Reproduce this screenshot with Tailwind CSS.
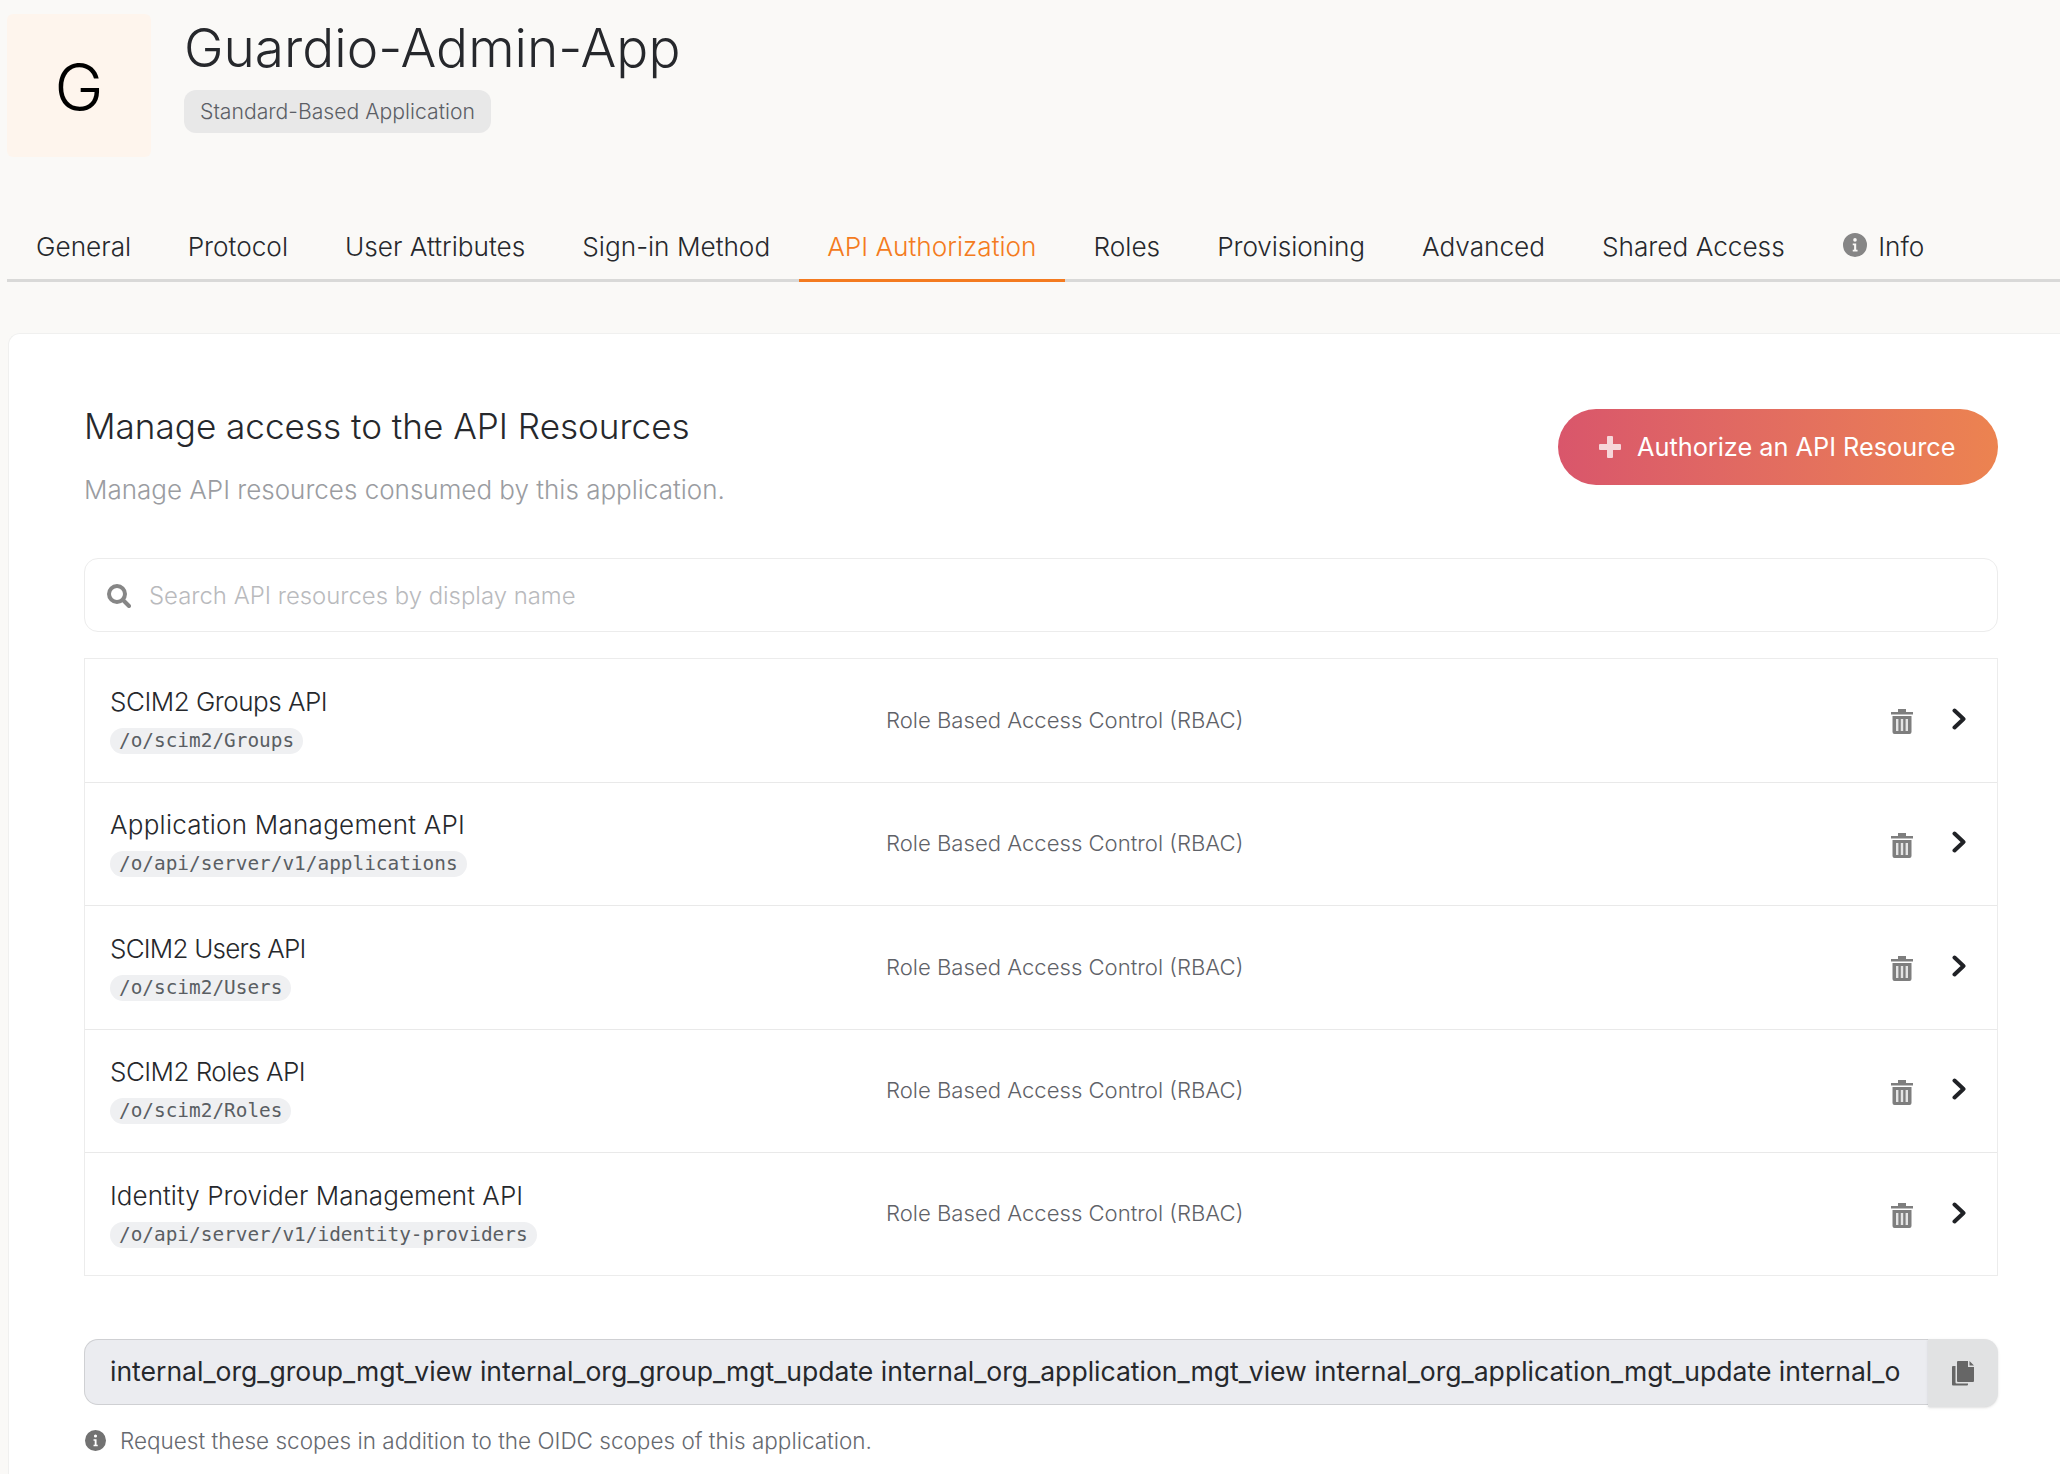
<!DOCTYPE html>
<html lang="en">
<head>
<meta charset="UTF-8">
<title>Guardio-Admin-App</title>
<script src="https://cdn.jsdelivr.net/npm/@tailwindcss/browser@4"></script>
</head>
<body class="w-[2060px] h-[1474px] overflow-hidden bg-[#faf9f7] font-['Inter',sans-serif] font-light text-[#1f2126]">
  <!-- Header -->
  <div class="flex pl-[7px] pt-[14px] h-[184px]">
    <div class="w-[144px] h-[143px] rounded-[6px] bg-[#fef5ed] flex items-center justify-center text-[66px] leading-none text-black pt-[2px]">G</div>
    <div class="ml-[33px]">
      <div class="text-[53.2px] leading-[66px] mt-[1px] text-[#26282c]">Guardio-Admin-App</div>
      <span class="block w-fit mt-[9px] px-[16px] h-[43px] leading-[43px] rounded-[12px] bg-[#e8e8e8] text-[21.2px] text-[#5c5f66]">Standard-Based Application</span>
    </div>
  </div>
  <!-- Tabs -->
  <div class="ml-[7px] flex h-[98px] border-b-[3px] border-[#d9d9d8] text-[26.2px] text-[#26282c]">
    <div class="pl-[29px] pr-[28px] pt-[43px]">General</div>
    <div class="px-[28.5px] pt-[43px]">Protocol</div>
    <div class="px-[28.5px] pt-[43px]">User Attributes</div>
    <div class="px-[28.5px] pt-[43px]">Sign-in Method</div>
    <div class="px-[28.5px] pt-[43px] text-[#f47b20] border-b-[3px] border-[#f47b20] h-[98px]">API Authorization</div>
    <div class="px-[28.5px] pt-[43px]">Roles</div>
    <div class="px-[28.5px] pt-[43px] tracking-[-0.1px]">Provisioning</div>
    <div class="px-[28.5px] pt-[43px]">Advanced</div>
    <div class="px-[28.5px] pt-[43px]">Shared Access</div>
    <div class="pl-[30px] pr-[29px] pt-[43px] flex items-start gap-[11px]">
      <svg class="w-[24px] h-[24px] mt-[6px]" viewBox="0 0 16 16" fill="#868686"><path fill-rule="evenodd" d="M8 0a8 8 0 1 1 0 16A8 8 0 0 1 8 0zM6.5 7v1.2h.9v3H6.5v1.2h3.2v-1.2h-.9V7zM8 3.4a1.2 1.2 0 1 0 0 2.4 1.2 1.2 0 0 0 0-2.4z"/></svg>
      Info
    </div>
  </div>
  <!-- Card -->
  <div class="ml-[8px] mt-[51px] bg-white rounded-tl-[12px] border-t border-l border-[#f0f0ef] h-[1200px] pl-[75px] pr-[62px] pt-[70px]">
    <div class="flex justify-between">
      <div>
        <div class="text-[35.1px] leading-[44px] text-[#26282c]">Manage access to the API Resources</div>
        <div class="mt-[23px] text-[26px] leading-[38px] text-[#9a9ca1]">Manage API resources consumed by this application.</div>
      </div>
      <div class="mt-[5px] w-[440px] h-[76px] rounded-full bg-gradient-to-r from-[#d9566b] to-[#ec8350] flex items-center pl-[41px] gap-[16px] text-[25.3px] font-normal text-white">
        <svg class="w-[22px] h-[22px]" viewBox="0 0 22 22" fill="#fff" fill-opacity=".75"><path d="M9 0h4a1 1 0 0 1 1 1v7h7a1 1 0 0 1 1 1v4a1 1 0 0 1-1 1h-7v7a1 1 0 0 1-1 1H9a1 1 0 0 1-1-1v-7H1a1 1 0 0 1-1-1V9a1 1 0 0 1 1-1h7V1a1 1 0 0 1 1-1z"/></svg>
        Authorize an API Resource
      </div>
    </div>
    <div class="mt-[49px] h-[74px] rounded-[14px] border border-[#ececec] flex items-center pl-[22px] pt-[1px] text-[23.9px] text-[#b9babd]">
      <svg class="w-[24px] h-[24px] mr-[18px]" viewBox="0 0 24 24" fill="none" stroke="#868686" stroke-width="4"><circle cx="10" cy="10" r="8"/><path d="M16 16l6 6" stroke-linecap="round"/></svg>
      Search API resources by display name
    </div>
    <!-- List -->
    <div class="mt-[26px] border border-[#ececec] text-[#26282c]">
      <div class="h-[123.5px] border-b border-[#e9e9e9] flex items-center pl-[25px] pr-[31px]">
        <div class="w-[776px] mb-[2px]">
          <div class="text-[26px] leading-[34px] tracking-[-0.48px]">SCIM2 Groups API</div>
          <span class="block w-fit mt-[9px] px-[9px] h-[26px] leading-[26px] rounded-full bg-[#eff0f2] font-['DejaVu_Sans_Mono',monospace] font-normal text-[19.4px] text-[#5a5e63]">/o/scim2/Groups</span>
        </div>
        <div class="text-[22.1px] text-[#5f6268]">Role Based Access Control (RBAC)</div>
        <svg class="ml-auto mt-[3px] w-[22px] h-[25px]" viewBox="0 0 22 25"><path fill="#7e7e7e" d="M7 0h8v3h7v2.5H0V3h7zM1.5 7h19v16a2 2 0 0 1-2 2h-15a2 2 0 0 1-2-2z"/><path fill="#e4e4e4" d="M5 10h2.4v12H5zM9.8 10h2.4v12H9.8zM14.6 10h2.4v12h-2.4z"/></svg>
        <svg class="ml-[39px] mt-[-3px] w-[14px] h-[22px]" viewBox="0 0 14 22" fill="none" stroke="#202226" stroke-width="4" stroke-linecap="round" stroke-linejoin="round"><path d="M2.5 2.5L11.5 11l-9 8.5"/></svg>
      </div>
      <div class="h-[123.5px] border-b border-[#e9e9e9] flex items-center pl-[25px] pr-[31px]">
        <div class="w-[776px] mb-[2px]">
          <div class="text-[26px] leading-[34px] tracking-[0.25px]">Application Management API</div>
          <span class="block w-fit mt-[9px] px-[9px] h-[26px] leading-[26px] rounded-full bg-[#eff0f2] font-['DejaVu_Sans_Mono',monospace] font-normal text-[19.4px] text-[#5a5e63]">/o/api/server/v1/applications</span>
        </div>
        <div class="text-[22.1px] text-[#5f6268]">Role Based Access Control (RBAC)</div>
        <svg class="ml-auto mt-[3px] w-[22px] h-[25px]" viewBox="0 0 22 25"><path fill="#7e7e7e" d="M7 0h8v3h7v2.5H0V3h7zM1.5 7h19v16a2 2 0 0 1-2 2h-15a2 2 0 0 1-2-2z"/><path fill="#e4e4e4" d="M5 10h2.4v12H5zM9.8 10h2.4v12H9.8zM14.6 10h2.4v12h-2.4z"/></svg>
        <svg class="ml-[39px] mt-[-3px] w-[14px] h-[22px]" viewBox="0 0 14 22" fill="none" stroke="#202226" stroke-width="4" stroke-linecap="round" stroke-linejoin="round"><path d="M2.5 2.5L11.5 11l-9 8.5"/></svg>
      </div>
      <div class="h-[123.5px] border-b border-[#e9e9e9] flex items-center pl-[25px] pr-[31px]">
        <div class="w-[776px] mb-[2px]">
          <div class="text-[26px] leading-[34px] tracking-[-0.78px]">SCIM2 Users API</div>
          <span class="block w-fit mt-[9px] px-[9px] h-[26px] leading-[26px] rounded-full bg-[#eff0f2] font-['DejaVu_Sans_Mono',monospace] font-normal text-[19.4px] text-[#5a5e63]">/o/scim2/Users</span>
        </div>
        <div class="text-[22.1px] text-[#5f6268]">Role Based Access Control (RBAC)</div>
        <svg class="ml-auto mt-[3px] w-[22px] h-[25px]" viewBox="0 0 22 25"><path fill="#7e7e7e" d="M7 0h8v3h7v2.5H0V3h7zM1.5 7h19v16a2 2 0 0 1-2 2h-15a2 2 0 0 1-2-2z"/><path fill="#e4e4e4" d="M5 10h2.4v12H5zM9.8 10h2.4v12H9.8zM14.6 10h2.4v12h-2.4z"/></svg>
        <svg class="ml-[39px] mt-[-3px] w-[14px] h-[22px]" viewBox="0 0 14 22" fill="none" stroke="#202226" stroke-width="4" stroke-linecap="round" stroke-linejoin="round"><path d="M2.5 2.5L11.5 11l-9 8.5"/></svg>
      </div>
      <div class="h-[123.5px] border-b border-[#e9e9e9] flex items-center pl-[25px] pr-[31px]">
        <div class="w-[776px] mb-[2px]">
          <div class="text-[26px] leading-[34px] tracking-[-0.53px]">SCIM2 Roles API</div>
          <span class="block w-fit mt-[9px] px-[9px] h-[26px] leading-[26px] rounded-full bg-[#eff0f2] font-['DejaVu_Sans_Mono',monospace] font-normal text-[19.4px] text-[#5a5e63]">/o/scim2/Roles</span>
        </div>
        <div class="text-[22.1px] text-[#5f6268]">Role Based Access Control (RBAC)</div>
        <svg class="ml-auto mt-[3px] w-[22px] h-[25px]" viewBox="0 0 22 25"><path fill="#7e7e7e" d="M7 0h8v3h7v2.5H0V3h7zM1.5 7h19v16a2 2 0 0 1-2 2h-15a2 2 0 0 1-2-2z"/><path fill="#e4e4e4" d="M5 10h2.4v12H5zM9.8 10h2.4v12H9.8zM14.6 10h2.4v12h-2.4z"/></svg>
        <svg class="ml-[39px] mt-[-3px] w-[14px] h-[22px]" viewBox="0 0 14 22" fill="none" stroke="#202226" stroke-width="4" stroke-linecap="round" stroke-linejoin="round"><path d="M2.5 2.5L11.5 11l-9 8.5"/></svg>
      </div>
      <div class="h-[122px] flex items-center pl-[25px] pr-[31px]">
        <div class="w-[776px] mb-[2px]">
          <div class="text-[26px] leading-[34px] tracking-[0.05px]">Identity Provider Management API</div>
          <span class="block w-fit mt-[9px] px-[9px] h-[26px] leading-[26px] rounded-full bg-[#eff0f2] font-['DejaVu_Sans_Mono',monospace] font-normal text-[19.4px] text-[#5a5e63]">/o/api/server/v1/identity-providers</span>
        </div>
        <div class="text-[22.1px] text-[#5f6268]">Role Based Access Control (RBAC)</div>
        <svg class="ml-auto mt-[3px] w-[22px] h-[25px]" viewBox="0 0 22 25"><path fill="#7e7e7e" d="M7 0h8v3h7v2.5H0V3h7zM1.5 7h19v16a2 2 0 0 1-2 2h-15a2 2 0 0 1-2-2z"/><path fill="#e4e4e4" d="M5 10h2.4v12H5zM9.8 10h2.4v12H9.8zM14.6 10h2.4v12h-2.4z"/></svg>
        <svg class="ml-[39px] mt-[-3px] w-[14px] h-[22px]" viewBox="0 0 14 22" fill="none" stroke="#202226" stroke-width="4" stroke-linecap="round" stroke-linejoin="round"><path d="M2.5 2.5L11.5 11l-9 8.5"/></svg>
      </div>
    </div>
    <!-- Scopes -->
    <div class="mt-[63px] flex items-start">
      <div class="flex-1 h-[66px] rounded-l-[14px] border border-r-0 border-[#cfd0d3] bg-[#ebecf0] flex items-center pl-[25px] text-[26.55px] font-normal text-[#26282c] whitespace-nowrap">internal_org_group_mgt_view internal_org_group_mgt_update internal_org_application_mgt_view internal_org_application_mgt_update internal_o</div>
      <div class="w-[70px] h-[68px] rounded-r-[14px] bg-[#e1e2e3] shadow-sm flex items-center justify-center">
        <svg class="w-[22px] h-[25px]" viewBox="0 0 22 25" fill="#666"><path d="M6 0h10v6h6v14a1 1 0 0 1-1 1H6a1 1 0 0 1-1-1V1a1 1 0 0 1 1-1zM17.500 0L22 4.500h-4.500z"/><path d="M0 6a1 1 0 0 1 1-1h2.500v16.500a1 1 0 0 0 1 1H16v1a1 1 0 0 1-1 1H1a1 1 0 0 1-1-1z"/></svg>
      </div>
    </div>
    <div class="mt-[17px] flex items-center gap-[14px] text-[22.5px] text-[#66696f] pl-[1px]">
      <svg class="w-[21px] h-[21px]" viewBox="0 0 16 16" fill="#727272"><path fill-rule="evenodd" d="M8 0a8 8 0 1 1 0 16A8 8 0 0 1 8 0zM6.5 7v1.2h.9v3H6.5v1.2h3.2v-1.2h-.9V7zM8 3.4a1.2 1.2 0 1 0 0 2.4 1.2 1.2 0 0 0 0-2.4z"/></svg>
      Request these scopes in addition to the OIDC scopes of this application.
    </div>
  </div>
</body>
</html>
